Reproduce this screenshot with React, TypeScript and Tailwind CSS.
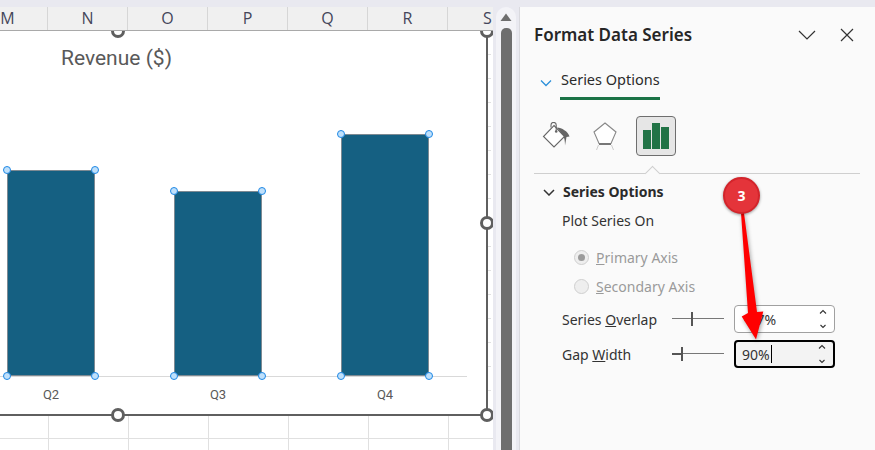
const columns = ['M', 'N', 'O', 'P', 'Q', 'R', 'S'];

const bars = [
  { label: 'Q2', height: 206 },
  { label: 'Q3', height: 185 },
  { label: 'Q4', height: 242 },
];

function Dot({ className }: { className: string }) {
  return <span className={`absolute h-[8px] w-[8px] rounded-full border border-[#1e88e5] bg-[#bfe0fb] ${className}`} />;
}

function Handle({ className }: { className: string }) {
  return <span className={`absolute z-[5] h-[14px] w-[14px] rounded-full border-[3px] border-[#5f5f5f] bg-white ${className}`} />;
}

function Spinner() {
  return (
    <svg className="ml-auto mr-[6px] h-[22px] w-[10px] shrink-0" viewBox="0 0 10 22" fill="none" stroke="#333" strokeWidth="1.1">
      <path d="M2 5.5 5 2.5 8 5.5" />
      <path d="M2.5 17 5 19.5 7.5 17" />
    </svg>
  );
}

function Slider({ pos }: { pos: number }) {
  return (
    <div className="relative h-[14px] w-[52px] shrink-0">
      <div className="absolute left-0 right-0 top-[6px] h-px bg-[#777]" />
      <div className="absolute top-0 h-[14px] w-[2px] bg-[#555]" style={{ left: pos }} />
      {pos < 10 && <div className="absolute left-0 top-[6px] h-[2px] bg-[#555]" style={{ width: pos }} />}
    </div>
  );
}

function Radio({ checked, children }: { checked?: boolean; children: React.ReactNode }) {
  return (
    <div className="flex h-[29px] items-center pl-[40px] text-[14px] text-[#9a9a9a]">
      <span className="flex h-[15px] w-[15px] items-center justify-center rounded-full border border-[#cfcfcf] bg-[#eeeeee]">
        {checked && <span className="h-[7px] w-[7px] rounded-full bg-[#9b9b9b]" />}
      </span>
      <span className="ml-[7px]">{children}</span>
    </div>
  );
}

export default function App() {
  return (
    <div className="relative flex h-[450px] w-[875px] flex-col overflow-hidden bg-[#e9e9f0] font-['Noto_Sans',sans-serif]">
      <div className="h-[7px] shrink-0" />
      <div className="flex min-h-0 flex-1">
        {/* sheet */}
        <div className="flex w-[493px] shrink-0 flex-col overflow-hidden bg-white">
          <div className="relative z-10 flex h-[24px] shrink-0 border-b border-[#a9a9a9] bg-[#f0f0f0] font-['Open_Sans',sans-serif] text-[16px] leading-[23px] text-[#44465a]">
            {columns.map((c, i) => (
              <div
                key={c}
                className={`flex h-[23px] shrink-0 items-center justify-center border-r border-[#d6d6d6] ${i === 0 ? 'ml-[-32px]' : ''} w-[80px]`}
              >
                {c}
              </div>
            ))}
          </div>
          <div className="flex shrink-0">
            <div className="relative flex h-[385px] w-[488px] shrink-0 flex-col border-b-2 border-r-2 border-[#5f5f5f] font-['Roboto',sans-serif]">
              <Handle className="left-[111px] top-[-7px]" />
              <Handle className="right-[-8px] top-[-7px]" />
              <Handle className="right-[-8px] top-[185px]" />
              <Handle className="bottom-[-8px] left-[111px]" />
              <Handle className="bottom-[-8px] right-[-8px]" />
              <div className="h-[103px] shrink-0 pl-[61px] pt-[13px] text-[21px] leading-[28px] text-[#595959]">Revenue ($)</div>
              <div className="mr-[19px] flex h-[243px] shrink-0 items-end gap-[79px] border-b border-[#d9d9d9] pl-[7px]">
                {bars.map(b => (
                  <div key={b.label} className="relative w-[88px] border border-[#7d8a93] bg-[#156082]" style={{ height: b.height }}>
                    <Dot className="left-[-5px] top-[-5px]" />
                    <Dot className="right-[-5px] top-[-5px]" />
                    <Dot className="bottom-[-5px] left-[-5px]" />
                    <Dot className="bottom-[-5px] right-[-5px]" />
                  </div>
                ))}
              </div>
              <div className="flex gap-[79px] pl-[7px] pt-[10px] text-[13px] leading-[16px] text-[#595959]">
                {bars.map(b => (
                  <div key={b.label} className="w-[88px] text-center">{b.label}</div>
                ))}
              </div>
            </div>
            <div className="w-[3px] shrink-0">
              {Array.from({ length: 16 }).map((_, i) => (
                <div key={i} className="h-[24px] border-b border-[#e0e0e0]" />
              ))}
            </div>
          </div>
          {[23, 12].map((h, r) => (
            <div key={r} className="flex shrink-0 border-b border-[#e0e0e0]" style={{ height: h }}>
              <div className="w-[49px] shrink-0 border-r border-[#e0e0e0]" />
              {[0, 1, 2, 3, 4].map(i => (
                <div key={i} className="w-[80px] shrink-0 border-r border-[#e0e0e0]" />
              ))}
            </div>
          ))}
        </div>

        {/* scroll bar */}
        <div className="flex w-[26px] shrink-0 justify-center bg-[#e9e9f0]">
          <div className="flex w-[20px] flex-col items-center rounded-t-[10px] bg-[#f3f3f7] pt-[6px]">
            <svg className="h-[8px] w-[12px] shrink-0" viewBox="0 0 12 8">
              <path d="M6 0.5 11.5 8H0.5Z" fill="#6e6e6e" />
            </svg>
            <div className="mt-[7px] w-[11px] flex-1 rounded-t-[5px] bg-[#6e6e6e]" />
          </div>
        </div>

        {/* format pane */}
        <div className="min-w-0 flex-1 border-l border-[#d9d9de] bg-[#fafafa] pl-[14px] text-[#2b2b2b]">
          <div className="flex h-[40px] items-center pr-[21px] pt-[15px]">
            <span className="text-[17px] font-semibold leading-[24px] text-[#262626]">Format Data Series</span>
            <svg className="ml-auto h-[10px] w-[18px]" viewBox="0 0 18 10" fill="none" stroke="#333" strokeWidth="1.2">
              <path d="M1 1 9 9 17 1" />
            </svg>
            <svg className="ml-[24px] h-[14px] w-[14px]" viewBox="0 0 14 14" fill="none" stroke="#333" strokeWidth="1.2">
              <path d="M1 1 13 13M13 1 1 13" />
            </svg>
          </div>

          <div className="mt-[22px] flex items-center">
            <svg className="-mt-[3px] ml-[6px] h-[8px] w-[12px]" viewBox="0 0 12 8" fill="none" stroke="#2b8fd9" strokeWidth="1.3">
              <path d="M1 1.5 6 6.5 11 1.5" />
            </svg>
            <div className="ml-[8px] w-[100px] border-b-[3px] border-[#1b7346] pb-[8px] pl-px text-[14.5px] leading-[20px] text-[#2b2b2b]">
              Series Options
            </div>
          </div>

          <div className="mt-[15px] flex h-[41px] items-center">
            <svg className="ml-[8px] mt-[3px] h-[30px] w-[32px]" viewBox="0 0 32 30" fill="none">
              <path d="M15 5.500C20 6 25.500 9 27.500 14.500L24.500 15 23 23.500C23 19 22.500 16 21 13.500Z" fill="#666" />
              <path d="M12 3.500 22.500 14.500 12 25 1.500 14.500Z" fill="#fff" stroke="#666" strokeWidth="1.1" />
              <path d="M9 5.500V3a2.600 2.600 0 0 1 5.200 0V9" stroke="#666" strokeWidth="1.1" />
              <circle cx="14.200" cy="9.500" r="1.300" fill="#666" />
            </svg>
            <svg className="ml-[18px] h-[30px] w-[26px]" viewBox="0 0 26 30" fill="none">
              <path d="M13 2 24 11 19 22.500H7L2 11Z" fill="#fff" stroke="#888" strokeWidth="1.1" />
              <path d="M7 23H19" stroke="#777" strokeWidth="2" />
              <path d="M6.500 24 4.500 29M19.500 24 21.500 29" stroke="#ccc" strokeWidth="1" />
            </svg>
            <div className="ml-[18px] flex h-[40px] w-[40px] items-end justify-center gap-px rounded-[4px] border border-[#6e6e6e] bg-[#e6e6e6] pb-[6px]">
              <span className="h-[19px] w-[8px] bg-[#217346]" />
              <span className="h-[26px] w-[8px] bg-[#217346]" />
              <span className="h-[22px] w-[8px] bg-[#217346]" />
            </div>
          </div>

          <div className="relative mr-[15px] mt-[17px] h-px bg-[#cfcfcf]">
            <span className="absolute left-[113px] top-[-5px] h-[11px] w-[11px] rotate-45 border-l border-t border-[#cfcfcf] bg-[#fafafa]" />
          </div>

          <div className="mt-[8px] flex h-[20px] items-center">
            <svg className="ml-[9px] h-[7px] w-[12px]" viewBox="0 0 12 7" fill="none" stroke="#333" strokeWidth="1.5">
              <path d="M1 1 6 6 11 1" />
            </svg>
            <span className="ml-[8px] text-[14px] font-bold leading-[20px] text-[#2b2b2b]">Series Options</span>
          </div>
          <div className="mt-[9px] pl-[28px] text-[14px] leading-[20px] text-[#333]">Plot Series On</div>

          <div className="mt-[12px]">
            <Radio checked><u>P</u>rimary Axis</Radio>
            <Radio><u>S</u>econdary Axis</Radio>
          </div>

          <div className="mt-[4px] flex h-[28px] items-center pl-[28px] text-[14px] text-[#333]">
            <span className="w-[110px] shrink-0">Series <u>O</u>verlap</span>
            <Slider pos={19} />
            <div className="ml-[10px] flex h-[28px] w-[101px] items-center rounded-[4px] border border-[#a0a0a0] bg-white pl-[9px] text-[#333]">
              -27%
              <Spinner />
            </div>
          </div>
          <div className="mt-[7px] flex h-[28px] items-center pl-[28px] text-[14px] text-[#333]">
            <span className="w-[110px] shrink-0">Gap <u>W</u>idth</span>
            <Slider pos={9} />
            <div className="ml-[10px] flex h-[28px] w-[101px] items-center rounded-[4px] border-[2px] border-black bg-[#f3f3f3] pl-[6px] text-[#333]">
              90%
              <span className="ml-px h-[18px] w-px bg-black" />
              <Spinner />
            </div>
          </div>
        </div>
      </div>

      {/* callout */}
      <svg className="absolute left-[730px] top-[205px] z-20 h-[140px] w-[40px] drop-shadow-[1px_2px_2px_rgba(0,0,0,0.35)]" viewBox="0 0 40 140">
        <path d="M11 8 14 8 27 107 33.300 106.500 26 134.500 11.700 111.500 18 108Z" fill="#ff0000" />
      </svg>
      <div className="absolute left-[723px] top-[177px] z-20 flex h-[37px] w-[37px] items-center justify-center rounded-full border-[2px] border-[#d3242b] bg-[#e4343a] text-[14px] font-bold text-white shadow-[0_1px_3px_rgba(0,0,0,0.4)]">
        3
      </div>
    </div>
  );
}
